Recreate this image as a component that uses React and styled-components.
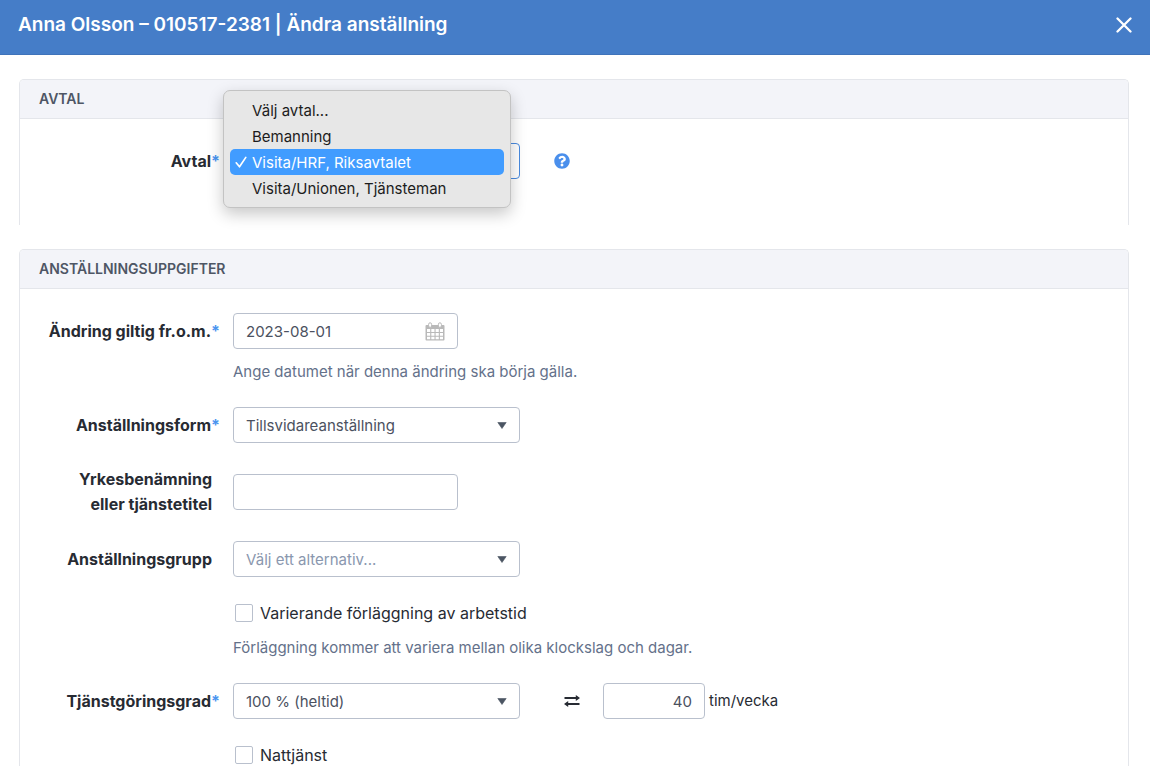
import React, { useState } from "react";
import styled, { createGlobalStyle } from "styled-components";
import { FaQuestionCircle } from "react-icons/fa";

const agreements = [
  "Välj avtal...",
  "Bemanning",
  "Visita/HRF, Riksavtalet",
  "Visita/Unionen, Tjänsteman",
];

const CloseIcon = () => (
  <svg width="16" height="16" viewBox="0 0 16 16" aria-hidden="true">
    <path
      d="M1.5 1.5l13 13M14.5 1.5l-13 13"
      stroke="#fff"
      strokeWidth="2.3"
      strokeLinecap="round"
    />
  </svg>
);

const CheckIcon = () => (
  <svg width="12" height="12" viewBox="0 0 12 12" aria-hidden="true">
    <path
      d="M1.2 6.8l3.3 4L10.8 1.4"
      fill="none"
      stroke="currentColor"
      strokeWidth="1.7"
      strokeLinecap="round"
      strokeLinejoin="round"
    />
  </svg>
);

const CaretIcon = () => (
  <svg width="10" height="7" viewBox="0 0 10 7" aria-hidden="true">
    <path d="M.8.5h8.4L5 6.5z" fill="#4b5563" stroke="#4b5563" strokeWidth=".6" />
  </svg>
);

const CalendarIcon = () => (
  <svg width="20" height="19" viewBox="0 0 20 19" aria-hidden="true">
    <rect x=".5" y="3" width="19" height="15.5" rx="1" fill="#b9b9b9" />
    <path
      d="M2 7h3.2v3H2zM6.3 7h3.2v3H6.3zM10.6 7h3.2v3h-3.2zM14.9 7H18v3h-3.1zM2 11h3.2v2.8H2zM6.3 11h3.2v2.8H6.3zM10.6 11h3.2v2.8h-3.2zM14.9 11H18v2.8h-3.1zM2 14.8h3.2v2.4H2zM6.3 14.8h3.2v2.4H6.3zM10.6 14.8h3.2v2.4h-3.2zM14.9 14.8H18v2.4h-3.1z"
      fill="#fff"
    />
    <rect x="3.6" y=".8" width="3" height="4.6" rx="1.5" fill="#fff" stroke="#b9b9b9" />
    <rect x="13.4" y=".8" width="3" height="4.6" rx="1.5" fill="#fff" stroke="#b9b9b9" />
  </svg>
);

const SwapIcon = () => (
  <svg width="16" height="12" viewBox="0 0 16 12" aria-hidden="true">
    <path d="M.5 3h12.5M3 9h12.5" stroke="#272b33" strokeWidth="1.8" />
    <path d="M11.8 0L16 3l-4.2 3zM4.2 6L0 9l4.2 3z" fill="#272b33" />
  </svg>
);

function Field({ id, label, required, hint, children }) {
  return (
    <FieldRow>
      <Label htmlFor={id} $required={required}>
        {label}
        {required && <Star>*</Star>}
      </Label>
      <Controls>{children}</Controls>
      {hint && <Hint>{hint}</Hint>}
    </FieldRow>
  );
}

function Select({ id, options, muted }) {
  return (
    <SelectBox>
      <SelectInput id={id} $muted={muted}>
        {options.map((option) => (
          <option key={option}>{option}</option>
        ))}
      </SelectInput>
      <CaretIcon />
    </SelectBox>
  );
}

function AgreementSelect({ id }) {
  const [selected, setSelected] = useState(agreements[2]);

  return (
    <MenuAnchor>
      <SelectBox>
        <SelectInput
          id={id}
          $focused
          value={selected}
          onChange={(e) => setSelected(e.target.value)}
        >
          {agreements.map((name) => (
            <option key={name}>{name}</option>
          ))}
        </SelectInput>
      </SelectBox>
      <Menu role="listbox" aria-label="Avtal">
        {agreements.map((name) => (
          <MenuItem
            key={name}
            type="button"
            role="option"
            aria-selected={name === selected}
            $active={name === selected}
            onClick={() => setSelected(name)}
          >
            <Tick>{name === selected && <CheckIcon />}</Tick>
            {name}
          </MenuItem>
        ))}
      </Menu>
    </MenuAnchor>
  );
}

export default function App() {
  return (
    <Dialog>
      <GlobalStyle />
      <Header>
        <Title>Anna Olsson – 010517-2381 | Ändra anställning</Title>
        <CloseButton type="button" aria-label="Stäng">
          <CloseIcon />
        </CloseButton>
      </Header>
      <Content>
        <Section>
          <SectionTitle>Avtal</SectionTitle>
          <SectionBody>
            <Field id="avtal" label="Avtal" required>
              <AgreementSelect id="avtal" />
              <HelpButton type="button" aria-label="Hjälp">
                <FaQuestionCircle size={16} />
              </HelpButton>
            </Field>
          </SectionBody>
        </Section>

        <Section>
          <SectionTitle>Anställningsuppgifter</SectionTitle>
          <SectionBody>
            <Field
              id="from"
              label="Ändring giltig fr.o.m."
              required
              hint="Ange datumet när denna ändring ska börja gälla."
            >
              <DateBox>
                <BareInput id="from" defaultValue="2023-08-01" />
                <CalendarIcon />
              </DateBox>
            </Field>
            <Field id="form" label="Anställningsform" required>
              <Select id="form" options={["Tillsvidareanställning"]} />
            </Field>
            <Field id="title" label="Yrkesbenämning eller tjänstetitel">
              <TextInput id="title" />
            </Field>
            <Field id="group" label="Anställningsgrupp">
              <Select id="group" options={["Välj ett alternativ..."]} muted />
            </Field>
            <FieldRow>
              <CheckLabel>
                <Checkbox type="checkbox" />
                Varierande förläggning av arbetstid
              </CheckLabel>
              <Hint>
                Förläggning kommer att variera mellan olika klockslag och dagar.
              </Hint>
            </FieldRow>
            <Field id="degree" label="Tjänstgöringsgrad" required>
              <Select id="degree" options={["100 % (heltid)"]} />
              <SwapBox>
                <SwapIcon />
              </SwapBox>
              <HoursInput id="hours" defaultValue="40" />
              <Unit htmlFor="hours">tim/vecka</Unit>
            </Field>
            <FieldRow>
              <CheckLabel>
                <Checkbox type="checkbox" />
                Nattjänst
              </CheckLabel>
            </FieldRow>
          </SectionBody>
        </Section>
      </Content>
    </Dialog>
  );
}

const GlobalStyle = createGlobalStyle`
  * {
    box-sizing: border-box;
  }
  body {
    margin: 0;
    background: #fff;
    color: #272b33;
    font-family: Inter, "Liberation Sans", sans-serif;
    font-size: 16px;
  }
  button,
  input,
  select {
    font-family: inherit;
  }
`;

const Dialog = styled.div`
  display: flex;
  flex-direction: column;
  height: 100vh;
`;

const Header = styled.header`
  display: flex;
  flex-shrink: 0;
  align-items: center;
  justify-content: space-between;
  height: 55px;
  padding: 0 18px 4px;
  background: #457dc8;
  border-bottom: 1px solid #3f73ba;
`;

const Title = styled.h1`
  margin: 0;
  color: #fff;
  font-size: 19px;
  font-weight: 600;
  line-height: 28px;
`;

const CloseButton = styled.button`
  display: flex;
  padding: 0;
  border: 0;
  background: none;
  cursor: pointer;
`;

const Content = styled.main`
  display: flex;
  flex: 1;
  flex-direction: column;
  gap: 24px;
  min-height: 0;
  padding: 24px 21px 24px 19px;
  overflow-y: auto;
  scrollbar-width: none;
`;

const Section = styled.section`
  flex-shrink: 0;
  border: 1px solid #e4e6eb;
  border-bottom: 0;
  border-radius: 5px 5px 0 0;
`;

const SectionTitle = styled.h2`
  margin: 0;
  padding: 0 19px;
  background: #f3f4f9;
  border-bottom: 1px solid #e4e6eb;
  border-radius: 4px 4px 0 0;
  color: #4e5665;
  font-size: 14px;
  font-weight: 600;
  line-height: 38px;
  text-transform: uppercase;
`;

const SectionBody = styled.div`
  display: flex;
  flex-direction: column;
  gap: 24px;
  padding: 24px 0 46px;
`;

const FieldRow = styled.div`
  display: grid;
  grid-template-columns: 200px 1fr;
  column-gap: 13px;
  row-gap: 12px;
  align-items: center;
`;

const Label = styled.label`
  padding-left: 26px;
  padding-right: ${(props) => (props.$required ? 0 : 8)}px;
  font-size: 16px;
  font-weight: 700;
  line-height: 25px;
  text-align: right;
`;

const Star = styled.span`
  color: #4a94ef;
`;

const Controls = styled.div`
  display: flex;
  align-items: center;
`;

const Hint = styled.p`
  grid-column: 2;
  margin: 0;
  color: #64718a;
  font-size: 15px;
  line-height: 22px;
`;

const TextInput = styled.input`
  width: 225px;
  height: 36px;
  padding: 0 12px;
  border: 1px solid #b9c0cd;
  border-radius: 4px;
  background: #fff;
  color: #4b5160;
  font-size: 15px;
`;

const HoursInput = styled(TextInput)`
  width: 102px;
  text-align: right;
`;

const DateBox = styled.div`
  display: flex;
  align-items: center;
  width: 225px;
  height: 36px;
  padding: 0 12px;
  border: 1px solid #b9c0cd;
  border-radius: 4px;
`;

const BareInput = styled.input`
  flex: 1;
  min-width: 0;
  padding: 0;
  border: 0;
  background: none;
  color: #4b5160;
  font-size: 15px;
`;

const SelectBox = styled.div`
  display: grid;
  align-items: center;
  width: 287px;

  > * {
    grid-area: 1 / 1;
  }
  svg {
    justify-self: end;
    margin-right: 13px;
    pointer-events: none;
  }
`;

const SelectInput = styled.select`
  width: 100%;
  height: 36px;
  padding: 0 12px;
  border: 1px solid ${(props) => (props.$focused ? "#4a8be0" : "#b9c0cd")};
  border-radius: 4px;
  background: #fff;
  color: ${(props) => (props.$muted ? "#8a97ae" : "#4b5160")};
  font-size: 15px;
  appearance: none;
`;

const MenuAnchor = styled.div`
  position: relative;
`;

const Menu = styled.div`
  position: absolute;
  z-index: 1;
  top: -53px;
  left: -10px;
  width: 288px;
  padding: 6px;
  border: 1px solid #c3c3c3;
  border-radius: 7px;
  background: #e7e7e7;
  box-shadow: 0 6px 16px rgba(0, 0, 0, 0.22);
`;

const MenuItem = styled.button`
  display: flex;
  align-items: center;
  width: 100%;
  height: 26px;
  padding: 0;
  border: 0;
  border-radius: 5px;
  background: ${(props) => (props.$active ? "#419cff" : "none")};
  color: ${(props) => (props.$active ? "#fff" : "#1c1c1c")};
  font-size: 15px;
`;

const Tick = styled.span`
  display: flex;
  justify-content: center;
  width: 22px;
`;

const HelpButton = styled.button`
  display: flex;
  margin-left: 34px;
  padding: 0;
  border: 0;
  background: none;
  color: #4a8fec;
  cursor: pointer;
`;

const CheckLabel = styled.label`
  display: flex;
  grid-column: 2;
  align-items: center;
  gap: 7px;
  padding-left: 2px;
  font-size: 16px;
  line-height: 24px;
`;

const Checkbox = styled.input`
  width: 18px;
  height: 18px;
  margin: 0;
  border: 1px solid #b9c0cd;
  border-radius: 2px;
  background: #fff;
  appearance: none;

  &:checked {
    background: #4a8fec;
  }
`;

const SwapBox = styled.span`
  display: flex;
  justify-content: center;
  width: 83px;
  padding-left: 20px;
`;

const Unit = styled.label`
  margin-left: 4px;
  font-size: 15px;
  line-height: 24px;
`;
